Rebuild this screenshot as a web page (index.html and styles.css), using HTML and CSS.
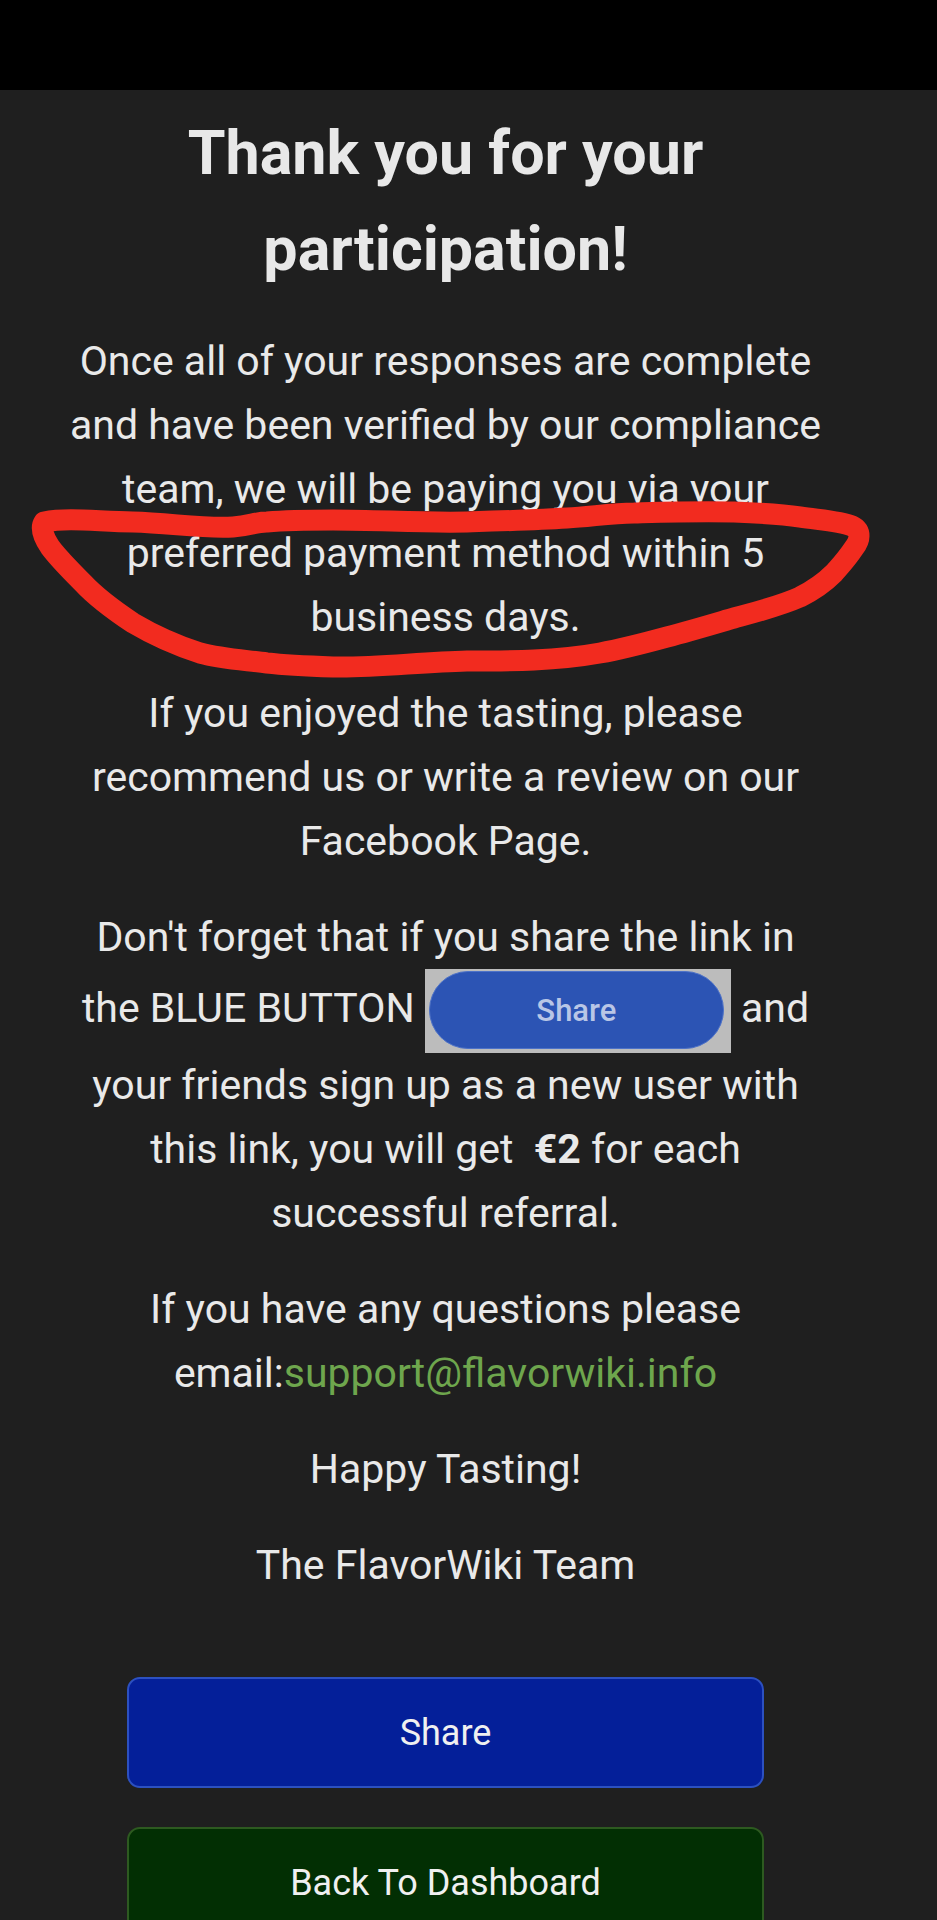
FILE: index.html
```html
<!DOCTYPE html>
<html lang="en">
<head>
<meta charset="utf-8">
<title>Thank you</title>
<link rel="stylesheet" href="styles.css">
</head>
<body>
<div class="statusbar"></div>
<main class="page">
  <h1 class="title">Thank you for your<br>participation!</h1>
  <p class="text">Once all of your responses are complete<br>and have been verified by our compliance<br>team, we will be paying you via your<br>preferred payment method within 5<br>business days.</p>
  <p class="text">If you enjoyed the tasting, please<br>recommend us or write a review on our<br>Facebook Page.</p>
  <p class="text">Don't forget that if you share the link in<br>the BLUE BUTTON <span class="chip"><span class="chip-pill">Share</span></span> and<br>your friends sign up as a new user with<br>this link, you will get &nbsp;<strong>€2</strong> for each<br>successful referral.</p>
  <p class="text">If you have any questions please<br>email:<a class="link" href="#">support@flavorwiki.info</a></p>
  <p class="text">Happy Tasting!</p>
  <p class="text">The FlavorWiki Team</p>
  <div class="actions">
    <button class="btn btn-share" type="button">Share</button>
    <button class="btn btn-back" type="button">Back To Dashboard</button>
  </div>
</main>
<svg class="scribble" viewBox="0 0 937 700" width="937" height="700" aria-hidden="true">
  <path d="M44 522 C70 517 100 522 133 522 C170 523 205 529 233 527 C250 526 255 522 267 522 C290 520 310 520 333 520 C380 520 420 523 467 522 C500 521 535 520 567 518 C590 517 610 513 634 513 C670 512 700 511 734 512 C760 513 780 514 800 517 C820 520 840 521 852 526 C862 531 860 540 854 548 C846 560 840 566 834 573 C822 585 812 591 800 597 C780 606 760 611 734 618 C710 625 690 631 667 637 C645 643 622 649 600 653 C578 657 556 659 534 660 C512 661 490 661 467 661 C420 662 375 668 333 667 C305 666 285 665 267 663 C245 660 222 659 200 653 C175 645 155 636 133 623 C112 609 96 597 83 583 C68 568 58 558 50 547 C44 538 40 528 44 522 Z"/>
</svg>
</body>
</html>
```
FILE: styles.css
```css
html, body {
  margin: 0;
  padding: 0;
}

body {
  position: relative;
  background: #1f1f1f;
  color: #e9e9e9;
  font-family: Roboto, "Noto Sans", "Liberation Sans", sans-serif;
  min-height: 1920px;
  overflow: hidden;
}

.statusbar {
  height: 90px;
  background: #000;
}

.page {
  padding: 0 56px 0 10px;
  text-align: center;
}

.title {
  margin: 15px 0 32px;
  font-size: 61px;
  line-height: 96px;
  font-weight: 700;
  color: #e8e8e8;
}

.text {
  margin: 0 0 32px;
  font-size: 41px;
  line-height: 64px;
  font-weight: 400;
  white-space: nowrap;
}

.text strong {
  font-weight: 700;
}

.link {
  color: #6ea64d;
  text-decoration: none;
}

.chip {
  display: inline-flex;
  vertical-align: middle;
  box-sizing: border-box;
  width: 306px;
  height: 84px;
  padding: 2px 7px 4px 4px;
  background: #bcbcbc;
}

.chip-pill {
  flex: 1;
  display: flex;
  align-items: center;
  justify-content: center;
  background: #2c54b4;
  border: 1px solid #4d72c8;
  border-radius: 40px;
  color: #b9c6e6;
  font-size: 31px;
  font-weight: 500;
  line-height: 1;
}

.actions {
  display: flex;
  flex-direction: column;
  align-items: center;
  gap: 39px;
  margin-top: 80px;
}

.btn {
  box-sizing: border-box;
  width: 637px;
  height: 111px;
  border-radius: 13px;
  font-family: Roboto, "Noto Sans", "Liberation Sans", sans-serif;
  font-size: 36px;
  color: #f0f0f0;
  cursor: pointer;
}

.btn-share {
  background: #041f99;
  border: 2px solid #2c50c0;
}

.btn-back {
  background: #022f03;
  border: 2px solid #2d5a20;
}

.scribble {
  position: absolute;
  top: 0;
  left: 0;
  pointer-events: none;
}

.scribble path {
  fill: none;
  stroke: #f22b1f;
  stroke-width: 21;
  stroke-linejoin: round;
  stroke-linecap: round;
}
```
